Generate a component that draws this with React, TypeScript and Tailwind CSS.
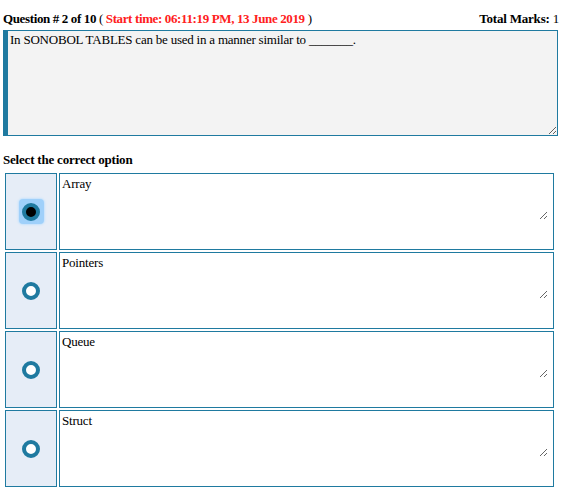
import React from 'react';

const options = [
  { label: 'Array', selected: true },
  { label: 'Pointers', selected: false },
  { label: 'Queue', selected: false },
  { label: 'Struct', selected: false },
];

const Radio: React.FC<{ selected: boolean }> = ({ selected }) => {
  if (selected) {
    return (
      <div className="w-[25px] h-[25px] rounded-[4px] bg-[#9fd0fa] flex items-center justify-center shadow-[0_0_2px_1px_#c4e2fc]">
        <div className="w-[18px] h-[18px] rounded-full border-[4px] border-[#1f7aa0] bg-black" />
      </div>
    );
  }
  return <div className="w-[18px] h-[18px] rounded-full border-[4px] border-[#1f7aa0] bg-white" />;
};

const App: React.FC = () => {
  return (
    <div className="w-[564px] h-[492px] bg-white text-black font-['Liberation_Serif',serif] text-[13px] px-[3px] overflow-hidden">
      {/* header */}
      <div className="flex justify-between items-end h-[27px] pb-[2px] font-bold leading-none">
        <div className="tracking-[-0.37px]">
          Question # 2 of 10 <span className="font-normal">(</span>{' '}
          <span className="text-[#ff2020]">Start time: 06:11:19 PM, 13 June 2019</span>{' '}
          <span className="font-normal">)</span>
        </div>
        <div className="pr-[2px] tracking-[-0.2px]">
          Total Marks: <span className="font-normal">1</span>
        </div>
      </div>

      {/* question box */}
      <textarea
        readOnly
        value="In SONOBOL TABLES can be used in a manner similar to _______."
        className="mt-[3px] block w-[555px] h-[106px] bg-[#f3f3f3] border border-[#1f7aa0] border-l-[5px] px-[2px] py-[1px] leading-[15px] tracking-[-0.22px] resize outline-none"
      />

      <div className="mt-[16px] font-bold leading-[16px] tracking-[-0.2px]">Select the correct option</div>

      {/* options */}
      <div className="mt-[5px] ml-[2px] flex flex-col gap-[2px]">
        {options.map((o) => (
          <div key={o.label} className="flex gap-[2px] h-[77px]">
            <div className="w-[52px] shrink-0 bg-[#e6edf7] border border-[#1f7aa0] flex items-center justify-center">
              <Radio selected={o.selected} />
            </div>
            <div className="w-[495px] border border-[#1f7aa0] bg-white">
              <textarea
                readOnly
                value={o.label}
                className="block w-[488px] h-[46px] bg-white px-[2px] py-[2px] leading-[15px] tracking-[-0.2px] resize outline-none"
              />
            </div>
          </div>
        ))}
      </div>
    </div>
  );
};

export default App;
